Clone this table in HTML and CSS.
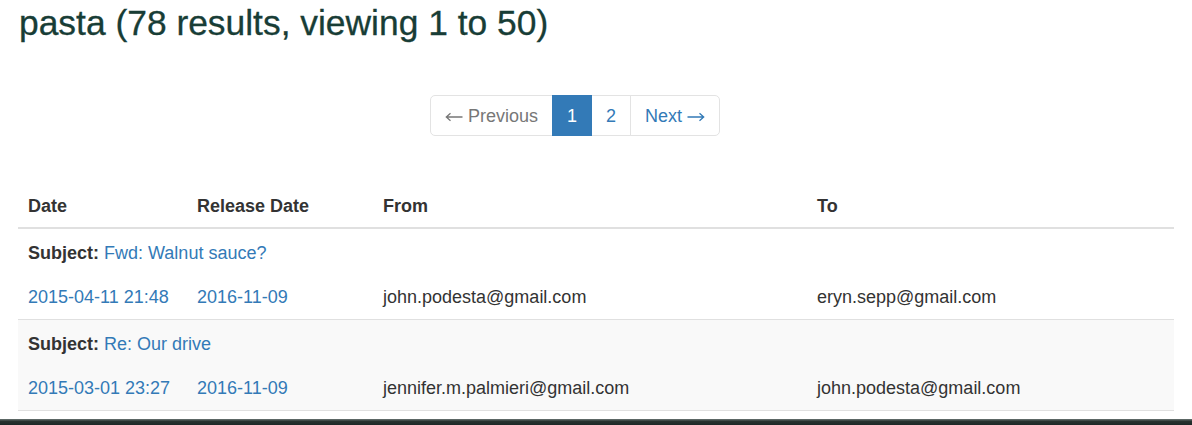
FILE: index.html
```html
<!DOCTYPE html>
<html>
<head>
<meta charset="utf-8">
<link rel="stylesheet" href="styles.css">
</head>
<body>
<div class="page">
  <h1 class="title">pasta (78 results, viewing 1 to 50)</h1>
  <nav class="pager-wrap">
    <ul class="pager">
      <li class="pg disabled"><svg class="arrow" width="18" height="10" viewBox="0 0 18 10"><path d="M17.5 5H1.5M5.5 1.2L1.3 5l4.2 3.8" fill="none" stroke="currentColor" stroke-width="1.3"/></svg> Previous</li>
      <li class="pg active">1</li>
      <li class="pg"><a href="#">2</a></li>
      <li class="pg"><a href="#">Next <svg class="arrow" width="18" height="10" viewBox="0 0 18 10"><path d="M0.5 5H16.5M12.5 1.2L16.7 5l-4.2 3.8" fill="none" stroke="currentColor" stroke-width="1.3"/></svg></a></li>
    </ul>
  </nav>
  <table class="results">
    <colgroup>
      <col class="c-date">
      <col class="c-rel">
      <col class="c-from">
      <col class="c-to">
    </colgroup>
    <thead>
      <tr><th>Date</th><th>Release Date</th><th>From</th><th>To</th></tr>
    </thead>
    <tbody class="item">
      <tr><td class="subject" colspan="4"><b>Subject:</b> <a href="#">Fwd: Walnut sauce?</a></td></tr>
      <tr><td><a href="#">2015-04-11 21:48</a></td><td><a href="#">2016-11-09</a></td><td>john.podesta@gmail.com</td><td>eryn.sepp@gmail.com</td></tr>
    </tbody>
    <tbody class="item striped">
      <tr><td class="subject" colspan="4"><b>Subject:</b> <a href="#">Re: Our drive</a></td></tr>
      <tr><td><a href="#">2015-03-01 23:27</a></td><td><a href="#">2016-11-09</a></td><td>jennifer.m.palmieri@gmail.com</td><td>john.podesta@gmail.com</td></tr>
    </tbody>
  </table>
</div>
<div class="screen-edge"></div>
</body>
</html>
```
FILE: styles.css
```css
html, body {
  margin: 0;
  padding: 0;
  background: #fff;
  overflow: hidden;
}
body {
  font-family: "Liberation Sans", Arial, sans-serif;
  font-size: 18px;
  line-height: 24px;
  color: #333;
  height: 425px;
  display: flex;
  flex-direction: column;
}
.page {
  padding: 0 18px;
  flex: 1;
}
.title {
  margin: 4px 0 0 1px;
  font-size: 35.4px;
  line-height: 38px;
  font-weight: normal;
  color: #183d36;
  -webkit-text-stroke: 0.3px #183d36;
}
.pager-wrap {
  display: flex;
  justify-content: center;
  padding-right: 42px;
  margin-top: 53px;
}
.pager {
  display: flex;
  list-style: none;
  margin: 0;
  padding: 0;
}
.pg {
  padding: 9px 14px 7px;
  line-height: 23px;
  border: 1px solid #e3e3e3;
  margin-left: -1px;
  color: #337ab7;
  background: #fff;
}
.pg:first-child {
  margin-left: 0;
  border-radius: 5px 0 0 5px;
}
.pg:last-child {
  border-radius: 0 5px 5px 0;
}
.pg a {
  color: #337ab7;
  text-decoration: none;
}
.arrow {
  vertical-align: 0px;
}
.pg.disabled {
  color: #777;
}
.pg.active {
  background: #337ab7;
  border-color: #337ab7;
  color: #fff;
  position: relative;
}
.results {
  margin-top: 47px;
  width: 100%;
  border-collapse: collapse;
}
.c-date { width: 169px; }
.c-rel { width: 186px; }
.c-from { width: 434px; }
.results th {
  text-align: left;
  font-weight: bold;
  padding: 11px 10px 9px;
  border-bottom: 2px solid #e0e0e0;
}
.results td {
  padding: 10px;
  text-align: left;
}
.results td.subject {
  padding-top: 12px;
}
.results a {
  color: #337ab7;
  text-decoration: none;
}
.item {
  border-bottom: 1px solid #e0e0e0;
}
.striped {
  background: #f9f9f9;
}
.screen-edge {
  height: 6px;
  background: linear-gradient(#6a7573, #27322f 40%, #1d2826);
}
```
